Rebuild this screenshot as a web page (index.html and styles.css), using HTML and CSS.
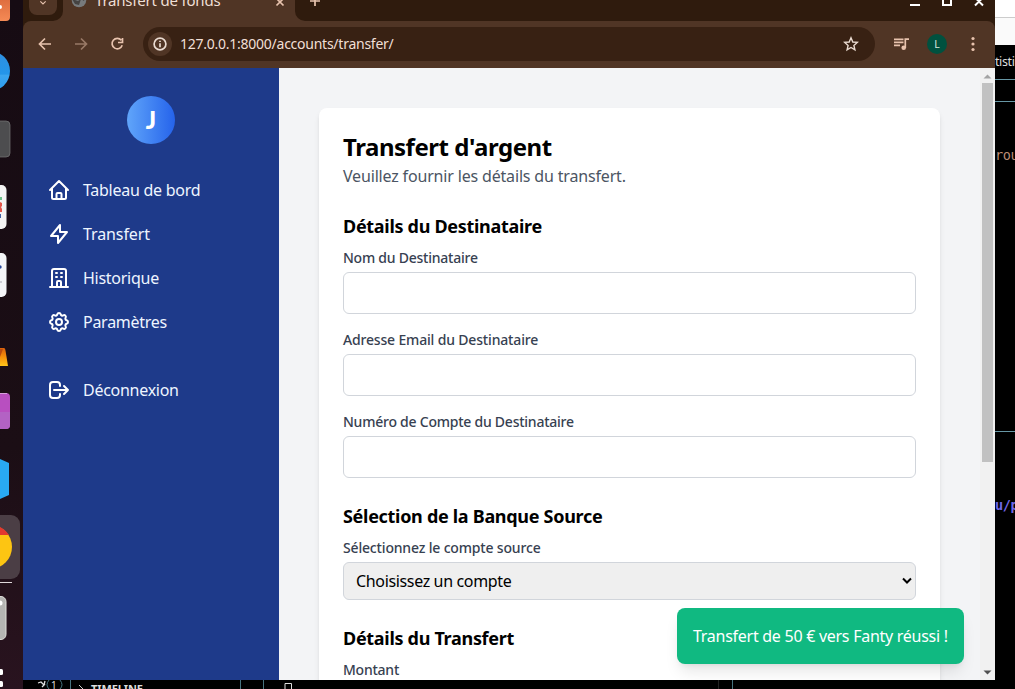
FILE: index.html
```html
<!DOCTYPE html>
<html lang="fr">
<head>
<meta charset="utf-8">
<title>Transfert de fonds</title>
<link rel="stylesheet" href="styles.css">
</head>
<body>
<div class="desktop">
  <div class="dock">
    <svg width="23" height="689" viewBox="0 0 23 689">
      <defs>
        <linearGradient id="orange" x1="0" y1="0" x2="0" y2="1"><stop offset="0" stop-color="#c9532c"/><stop offset="1" stop-color="#f58a55"/></linearGradient>
        <linearGradient id="sky" x1="0" y1="0" x2="0" y2="1"><stop offset="0" stop-color="#2f8fe0"/><stop offset=".58" stop-color="#2496ea"/><stop offset=".6" stop-color="#3ba5ef"/><stop offset="1" stop-color="#2b9cf0"/></linearGradient>
        <linearGradient id="cone" x1="0" y1="0" x2="0" y2="1"><stop offset="0" stop-color="#d9600c"/><stop offset=".5" stop-color="#f5900a"/><stop offset="1" stop-color="#ffc41a"/></linearGradient>
      </defs>
      <rect x="-30" y="-20" width="40" height="41" rx="4" fill="url(#orange)"/>
      <circle cx="0" cy="7" r="2" fill="#fff"/>
      <circle cx="-10" cy="71" r="20" fill="url(#sky)"/>
      <rect x="-30" y="121" width="40" height="36" rx="4" fill="#4d4d4f" stroke="#777" stroke-width=".7"/>
      <rect x="-30" y="185" width="36.500" height="44" rx="5" fill="#f4f4f4"/>
      <path d="M0 197h2v3H0z" fill="#6cbf8a"/><path d="M0 202l2 1v3l-1 1l1 2v3H0z" fill="#e4574c"/><path d="M0 214h1v4H0z" fill="#3f62a8"/>
      <rect x="-30" y="253" width="36.500" height="44" rx="5" fill="#f4f5f8"/>
      <circle cx="0" cy="267" r="1.700" fill="#27489b"/><path d="M0 282h2" stroke="#a9a9b5"/>
      <path d="M-3 348H4Q5 348 5.400 350L8 366H-3z" fill="url(#cone)"/><path d="M0 349h3l-3 8z" fill="#b94b0e"/>
      <rect x="-30" y="393" width="40" height="36" rx="4" fill="#b84fc0"/><path d="M0 412H10V425Q10 429 6 429H0z" fill="#b362c4"/><path d="M0 393.500H7" stroke="#d7a0dc"/>
      <path d="M0 459L9 463V495L0 499z" fill="#29a9f2"/>
      <rect x="-30" y="515" width="50" height="64" rx="9" fill="#4b3e45"/>
      <circle cx="-10" cy="547" r="22" fill="#fdc512"/><path d="M-10 525A22 22 0 0 1 9 535H-10z" fill="#e2392f"/>
      <path d="M0 582.500H12" stroke="#ded7da"/>
      <rect x="-30" y="596.500" width="36" height="43" rx="5" fill="#b5b5b3" stroke="#deded9"/><circle cx="0" cy="603" r="2.500" fill="#fff"/>
      <rect x="-3" y="669" width="6" height="6" rx="1.500" fill="#fff"/><rect x="-3" y="681" width="6" height="6" rx="1.500" fill="#fff"/>
    </svg>
  </div>
  <div class="workspace">
    <div class="upper">
      <div class="browser">
        <div class="tabstrip">
          <div class="tab-search"><svg width="12" height="12" viewBox="0 0 12 12"><path d="M2 2L6 6L10 2" class="line tan"/></svg></div>
          <div class="tab">
            <svg width="16" height="16" viewBox="0 0 16 16"><circle cx="8" cy="8" r="7.300" fill="#777a7c"/><path d="M1 7L7 9L10 7L8 13L4 12zM9 2L14 5L13 9L10 7z" fill="#454342"/></svg>
            <span class="tab-title">Transfert de fonds</span>
            <svg width="10" height="10" viewBox="0 0 10 10"><path d="M1.500 1.500L8.500 8.500M8.500 1.500L1.500 8.500" class="line tan"/></svg>
          </div>
          <div class="tab-rest">
            <svg width="12" height="12" viewBox="0 0 12 12"><path d="M6 1V11M1 6H11" class="line tan"/></svg>
            <svg class="window-buttons" width="76" height="12" viewBox="0 0 76 12"><path d="M0 10H10M33 1V10H41V1M65 10.500L73 2.500M65 2.500L73 10.500" fill="none" stroke="#fff" stroke-width="2"/></svg>
          </div>
        </div>
        <div class="toolbar">
          <svg class="arrow" width="14" height="14" viewBox="0 0 14 14"><path d="M13 7H2M7 1.500L1.500 7L7 12.500" class="line tan"/></svg>
          <svg class="arrow dim" width="14" height="14" viewBox="0 0 14 14"><path d="M1 7H12M7 1.500L12.500 7L7 12.500" class="line tan"/></svg>
          <svg class="reload" width="14" height="14" viewBox="0 0 14 14"><path d="M11.300 3.300A5.200 5.200 0 1 0 12.200 8.300M12.500 1V5.500H8" class="line tan"/></svg>
          <div class="address">
            <div class="info"><svg width="14" height="14" viewBox="0 0 14 14"><circle cx="7" cy="7" r="5.900" class="line cream"/><path d="M7 6.200V10.200M7 3.700V5.100" class="line cream"/></svg></div>
            <span class="url">127.0.0.1:8000/accounts/transfer/</span>
            <svg width="16" height="16" viewBox="0 0 16 16"><path d="M8 1.800L9.800 6L14.300 6.400L10.900 9.400L11.900 13.900L8 11.500L4.100 13.900L5.100 9.400L1.700 6.400L6.200 6z" class="line cream thin"/></svg>
          </div>
          <svg class="media" width="17" height="14" viewBox="0 0 17 14"><path d="M1 2.300H10.500M1 5.300H10.500M1 8.300H7M12.300 11V2.200H16" class="line tan"/><circle cx="10.700" cy="10.700" r="2.300" fill="#e8c3ae"/></svg>
          <div class="profile">L</div>
          <svg class="dots" width="4" height="16" viewBox="0 0 4 16" fill="#e8c3ae"><circle cx="2" cy="2.500" r="1.600"/><circle cx="2" cy="8" r="1.600"/><circle cx="2" cy="13.500" r="1.600"/></svg>
        </div>
        <div class="page">
          <nav class="sidebar">
            <div class="avatar">J</div>
            <a class="nav-item"><svg class="icon" viewBox="0 0 24 24"><path d="M3 12L12 3L21 12M5 10.500V19.500Q5 21 6.500 21H17.500Q19 21 19 19.500V10.500M9.500 21V16Q9.500 15 10.500 15H13.500Q14.500 15 14.500 16V21"/></svg><span class="t-home">Tableau de bord</span></a>
            <a class="nav-item"><svg class="icon" viewBox="0 0 24 24"><path d="M13 3L4 14H11V21L20 10H13z"/></svg><span class="t-transfer">Transfert</span></a>
            <a class="nav-item"><svg class="icon" viewBox="0 0 24 24"><path d="M3 21H21M5 21V5Q5 3 7 3H17Q19 3 19 5V21M9 7H10M14 7H15M9 11H10M14 11H15M10 21V16Q10 15 11 15H13Q14 15 14 16V21"/></svg><span class="t-history">Historique</span></a>
            <a class="nav-item"><svg class="icon" viewBox="0 0 24 24"><path d="M10.325 4.317c.426-1.756 2.924-1.756 3.350 0a1.724 1.724 0 002.573 1.066c1.543-.94 3.310.826 2.370 2.370a1.724 1.724 0 001.065 2.572c1.756.426 1.756 2.924 0 3.350a1.724 1.724 0 00-1.066 2.573c.94 1.543-.826 3.310-2.370 2.370a1.724 1.724 0 00-2.572 1.065c-.426 1.756-2.924 1.756-3.350 0a1.724 1.724 0 00-2.573-1.066c-1.543.94-3.310-.826-2.370-2.370a1.724 1.724 0 00-1.065-2.572c-1.756-.426-1.756-2.924 0-3.350a1.724 1.724 0 001.066-2.573c-.94-1.543.826-3.310 2.370-2.370.996.608 2.296.07 2.572-1.065z"/><circle cx="12" cy="12" r="3"/></svg><span class="t-settings">Paramètres</span></a>
            <a class="nav-item logout"><svg class="icon" viewBox="0 0 24 24"><path d="M17 16l4-4m0 0l-4-4m4 4H7m6 4v1a3 3 0 01-3 3H6a3 3 0 01-3-3V7a3 3 0 013-3h4a3 3 0 013 3v1"/></svg><span class="t-logout">Déconnexion</span></a>
          </nav>
          <main class="content">
            <form class="card">
              <h1><span>Transfert d'argent</span></h1>
              <p class="intro">Veuillez fournir les détails du transfert.</p>
              <h2 class="h-dest">Détails du Destinataire</h2>
              <label class="l-name">Nom du Destinataire</label>
              <input class="field" type="text">
              <label class="l-mail">Adresse Email du Destinataire</label>
              <input class="field" type="text">
              <label class="l-num">Numéro de Compte du Destinataire</label>
              <input class="field" type="text">
              <h2 class="h-bank">Sélection de la Banque Source</h2>
              <label class="l-src">Sélectionnez le compte source</label>
              <div class="select"><span>Choisissez un compte</span><svg width="12" height="8" viewBox="0 0 12 8"><path d="M2 1.500L6 5.500L10 1.500" fill="none" stroke="#000" stroke-width="2"/></svg></div>
              <h2 class="h-det">Détails du Transfert</h2>
              <label class="l-amount">Montant</label>
            </form>
          </main>
          <div class="scrollbar">
            <svg width="9" height="5" viewBox="0 0 9 5"><path d="M.5 4.500L4.500 .5L8.500 4.500z" fill="#a3a3a3"/></svg>
            <div class="thumb"></div>
            <svg width="9" height="5" viewBox="0 0 9 5"><path d="M.5 .5L4.500 4.500L8.500 .5z" fill="#505050"/></svg>
          </div>
          <div class="toast"><span>Transfert de 50 € vers Fanty réussi !</span></div>
        </div>
      </div>
      <div class="editor-edge">
        <div class="edge-white"></div>
        <div class="edge-tabs">tisti</div>
        <div class="edge-crumbs"></div>
        <div class="edge-code">rou</div>
        <div class="edge-terminal">u/p</div>
      </div>
    </div>
    <div class="editor-bottom">
      <svg width="992" height="9" viewBox="0 0 992 9"><path d="M15 3L18 2L21 5L22 1M19 7L22 4" fill="none" stroke="#ddd" stroke-width="1.300"/><path d="M26 0Q22 5 26 9M37 0Q41 5 37 9M47.500 0V9M217.500 0V9M240.500 0V9M709.500 0V9" fill="none" stroke="#48737f"/><path d="M695.500 0V9" stroke="#222"/><path d="M56 5L60 9" stroke="#ccc"/><path d="M262 9V3.500H268.500V9" fill="none" stroke="#ddd"/></svg>
      <span class="count">1</span><span class="timeline">TIMELINE</span>
    </div>
  </div>
</div>
</body>
</html>
```
FILE: styles.css
```css
* { box-sizing: border-box; }
body { margin: 0; font-family: "Noto Sans", "Open Sans", sans-serif; font-size: 16px; line-height: 24px; }
svg { display: block; flex: none; }
span, label, h1, h2, p { white-space: nowrap; }
.desktop { width: 1015px; height: 689px; display: flex; overflow: hidden; background: #000; }
.dock { width: 23px; flex: none; background: linear-gradient(#160b13, #1b0e15 65%, #29131f); }
.workspace { width: 992px; display: flex; flex-direction: column; }
.upper { display: flex; height: 680px; }
.browser { width: 972px; height: 680px; display: flex; flex-direction: column; background: #2f1b0d; }
.line { fill: none; stroke-width: 1.700; }
.thin { stroke-width: 1.400; }
.tan { stroke: #e8c3ae; }
.cream { stroke: #eadbd1; }

.tabstrip { height: 21px; flex: none; display: flex; overflow: hidden; background: #503525; }
.tab-search { width: 40px; height: 21px; padding: 0 6px; background: #2f1b0d; border-bottom-right-radius: 10px; }
.tab-search svg { width: 28px; height: 15px; padding: 0 7px 7px; background: #503525; border-radius: 0 0 8px 8px; overflow: visible; }
.tab { width: 232px; display: flex; align-items: flex-start; padding-left: 8px; }
.tab > svg:first-child { margin-top: -8px; }
.tab-title { width: 179px; margin: -12px 0 0 8px; color: #efdfd5; font-size: 15px; letter-spacing: -.2px; }
.tab > svg:last-child { margin: -3px 0 0 1px; }
.tab-rest { flex: 1; display: flex; justify-content: space-between; padding: 0 9px 0 14px; background: #2f1b0d; border-bottom-left-radius: 10px; }
.tab-rest svg { margin-top: -5px; }

.toolbar { height: 47px; flex: none; display: flex; align-items: center; padding: 0 20px 0 15px; background: #503525; border-radius: 8px 8px 0 0; }
.toolbar > svg, .address, .profile { margin-top: -1px; }
.arrow { margin-right: 22px; }
.dim { opacity: .48; }
.reload { margin-right: 19px; }
.address { width: 732px; height: 34px; margin-right: 18px; display: flex; align-items: center; padding: 0 16px 0 5px; background: #382113; border-radius: 17px; }
.info { width: 24px; height: 24px; margin-right: 8px; display: grid; place-items: center; background: #503525; border-radius: 50%; }
.url { flex: 1; font-size: 14px; letter-spacing: -.25px; color: #f0dfd5; }
.profile { width: 20px; height: 20px; margin-right: 23px; margin-left: 17px; border-radius: 50%; background: #00513f; color: #d7e7df; text-align: center; font-size: 10.500px; line-height: 20px; }
.dots { margin-left: 1px; }

.page { flex: 1; min-height: 0; display: flex; position: relative; overflow: hidden; background: #f3f4f6; }
.sidebar { width: 256px; flex: none; padding: 28px 24px; display: flex; flex-direction: column; background: #1e3a8a; color: #eef5ff; }
.avatar { width: 48px; height: 48px; margin: 0 auto 24px; border-radius: 50%; background: linear-gradient(90deg, #60a5fa, #2563eb); color: #fff; text-align: center; font: 900 24px/47px Lato, sans-serif; }
.nav-item { height: 44px; display: flex; align-items: center; gap: 12px; letter-spacing: -.27px; }
.t-transfer { letter-spacing: -.1px; }
.logout { margin-top: 24px; }
.icon { width: 24px; height: 24px; fill: none; stroke: #fff; stroke-width: 2; stroke-linecap: round; stroke-linejoin: round; }

.content { width: 701px; padding: 40px; overflow: hidden; }
.card { height: 700px; padding: 24px; display: flex; flex-direction: column; background: #fff; border-radius: 8px; box-shadow: 0 4px 6px -1px #0000001a, 0 2px 4px -2px #0000001a; }
h1 { height: 32px; margin: 0; font-size: 24px; line-height: 30px; font-weight: 700; letter-spacing: -.46px; }
.intro { margin: 0; color: #4b5563; letter-spacing: -.17px; }
h2 { margin: 24px 0 8px; font-size: 18px; line-height: 28px; font-weight: 700; letter-spacing: -.3px; }
label { font-size: 14px; line-height: 20px; font-weight: 500; color: #374151; letter-spacing: -.24px; }
.l-mail, .l-src { letter-spacing: -.17px; }
.field { height: 42px; flex: none; margin: 4px 0 16px; border: 1px solid #d1d5db; border-radius: 6px; background: #fff; }
.field + h2 { margin-top: 8px; }
.select { height: 38px; flex: none; margin-top: 4px; padding: 0 2px 0 12px; display: flex; align-items: center; justify-content: space-between; border: 1px solid #d1d5db; border-radius: 6px; background: #efefef; letter-spacing: -.35px; }
.scrollbar { width: 15px; padding: 6px 0 5px; display: flex; flex-direction: column; align-items: center; background: #f1f1f1; }
.thumb { width: 11px; height: 379px; margin: 4px 0 auto; background: #c1c1c1; }
.toast { position: absolute; right: 31px; bottom: 16px; width: 287px; height: 56px; padding: 16px; background: #10b981; color: #fff; border-radius: 8px; box-shadow: 0 10px 15px -3px #0000001a, 0 4px 6px -4px #0000001a; letter-spacing: -.27px; }

.editor-edge { width: 20px; display: flex; flex-direction: column; overflow: hidden; background: #000; color: #ddd; font-size: 12.500px; letter-spacing: -.4px; }
.edge-white { height: 45px; background: linear-gradient(#fff 17px, #ccc 17px, #ccc 18px, #fafafa 18px); }
.edge-tabs { height: 35px; line-height: 34px; border-bottom: 1px solid #6797a5; }
.edge-crumbs { height: 22px; border-bottom: 1px solid #6797a5; }
.edge-code { height: 330px; padding-top: 41px; color: #bd8d75; font: 13.500px/24px "DejaVu Sans Mono", monospace; border-bottom: 1px solid #6797a5; }
.edge-terminal { padding-top: 61px; color: #7067e8; font: bold 13.500px/24px "DejaVu Sans Mono", monospace; }
.editor-bottom { height: 9px; display: flex; align-items: flex-start; overflow: hidden; position: relative; color: #ddd; background: #000; }
.count { position: absolute; left: 28px; top: -1px; font-size: 10px; line-height: 12px; }
.timeline { position: absolute; left: 68px; top: 2px; font-size: 11px; line-height: 14px; font-weight: 700; letter-spacing: -.1px; }
```
